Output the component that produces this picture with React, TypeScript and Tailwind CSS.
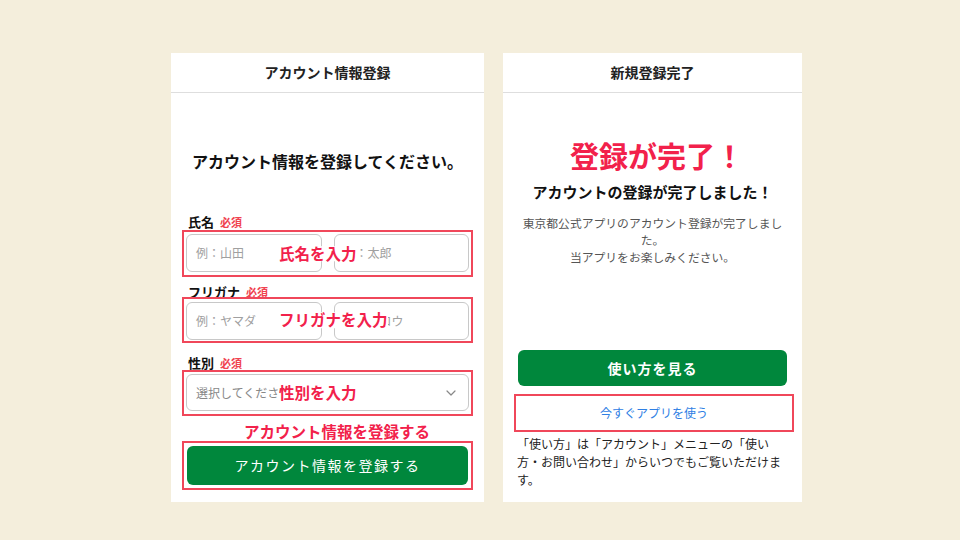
import React from 'react';

const font = { fontFamily: '"Noto Sans CJK JP", "Noto Sans", sans-serif' };

const Required = () => (
    <span className="ml-[6px] text-[11px] font-bold text-[#f0434f]">必須</span>
);

const Note = ({ children }: { children: React.ReactNode }) => (
    <span className="pointer-events-none absolute left-[95px] top-1/2 -translate-y-1/2 whitespace-nowrap bg-white text-[15.5px] font-bold leading-none text-[#f2214b]">
        {children}
    </span>
);

const Field = ({ text }: { text: string }) => (
    <div className="flex h-[38px] flex-1 items-center overflow-hidden whitespace-nowrap rounded-md border border-[#c8c8c8] pl-[9px] text-[12px] text-[#a0a0a0]">
        {text}
    </div>
);

const RegisterPanel = () => (
    <div className="flex h-[449px] w-[313px] flex-col bg-white">
        <div className="flex h-[40px] items-center justify-center border-b border-[#dedede] text-[14px] font-bold text-[#222]">
            アカウント情報登録
        </div>
        <p className="mt-[57px] text-center text-[16px] font-bold leading-[22px] text-[#111]">
            アカウント情報を登録してください。
        </p>

        <div className="mt-[43px] px-[11px]">
            <div className="pl-[6px] text-[13px] font-bold leading-[14px] text-[#111]">
                氏名<Required />
            </div>
            <div className="relative mt-[1px] flex gap-[12px] border-2 border-[#f0475a] p-[2px] pb-[3px]">
                <Field text="例：山田" />
                <Field text="例：太郎" />
                <Note>氏名を入力</Note>
            </div>

            <div className="mt-[8px] pl-[6px] text-[13px] font-bold leading-[14px] text-[#111]">
                フリガナ<Required />
            </div>
            <div className="relative -mt-[2px] flex gap-[12px] border-2 border-[#f0475a] px-[2px] pb-[1px] pt-[3px]">
                <Field text="例：ヤマダ" />
                <Field text="例：タロウ" />
                <Note>フリガナを入力</Note>
            </div>

            <div className="mt-[13px] pl-[6px] text-[13px] font-bold leading-[14px] text-[#111]">
                性別<Required />
            </div>
            <div className="relative border-2 border-[#f0475a] p-[2px] pb-[3px]">
                <div className="flex h-[37px] items-center justify-between rounded-md border border-[#c8c8c8] pl-[9px] pr-[12px] text-[12px] text-[#888]">
                    <span>選択してください</span>
                    <svg width="10" height="6" viewBox="0 0 10 6" fill="none">
                        <path d="M1 1l4 4 4-4" stroke="#888" strokeWidth="1.2" strokeLinecap="round" strokeLinejoin="round" />
                    </svg>
                </div>
                <Note>性別を入力</Note>
            </div>

            <div className="mt-[6px] pl-[19px] text-center text-[15.5px] font-bold leading-[18px] text-[#f2214b]">
                アカウント情報を登録する
            </div>
            <div className="mt-[1px] border-2 border-[#f0475a] p-[3px]">
                <button className="flex h-[39px] w-full items-center justify-center rounded-md bg-[#00873c] text-[14px] tracking-[1.5px] text-white">
                    アカウント情報を登録する
                </button>
            </div>
        </div>
    </div>
);

const DonePanel = () => (
    <div className="flex h-[449px] w-[299px] flex-col bg-white">
        <div className="flex h-[40px] items-center justify-center border-b border-[#dedede] text-[14px] font-bold text-[#222]">
            新規登録完了
        </div>
        <p className="mt-[42px] pl-[9px] text-center text-[29px] font-bold leading-[40px] text-[#f2214b]">
            登録が完了！
        </p>
        <p className="mt-[7px] text-center text-[15px] font-bold leading-[20px] text-[#111]">
            アカウントの登録が完了しました！
        </p>
        <p className="mt-[12px] px-[16px] text-center text-[11.8px] leading-[17px] text-[#555]">
            東京都公式アプリのアカウント登録が完了しました。
            <br />
            当アプリをお楽しみください。
        </p>

        <div className="mt-auto pb-[13px]">
            <div className="px-[15px]">
                <button className="flex h-[36px] w-full items-center justify-center rounded-md bg-[#00873c] text-[14px] font-bold tracking-[1px] text-white">
                    使い方を見る
                </button>
            </div>
            <div className="ml-[11px] mt-[8px] flex h-[38px] w-[280px] items-center justify-center border-2 border-[#f0475a] text-[12px] text-[#2f80e4]">
                今すぐアプリを使う
            </div>
            <p className="mt-[3px] px-[14px] text-[12px] leading-[18px] text-[#222]">
                「使い方」は「アカウント」メニューの「使い方・お問い合わせ」からいつでもご覧いただけます。
            </p>
        </div>
    </div>
);

export default function App() {
    return (
        <div className="flex h-[540px] w-[960px] gap-[19px] bg-[#f4eedc] pl-[171px] pt-[53px]" style={font}>
            <RegisterPanel />
            <DonePanel />
        </div>
    );
}
